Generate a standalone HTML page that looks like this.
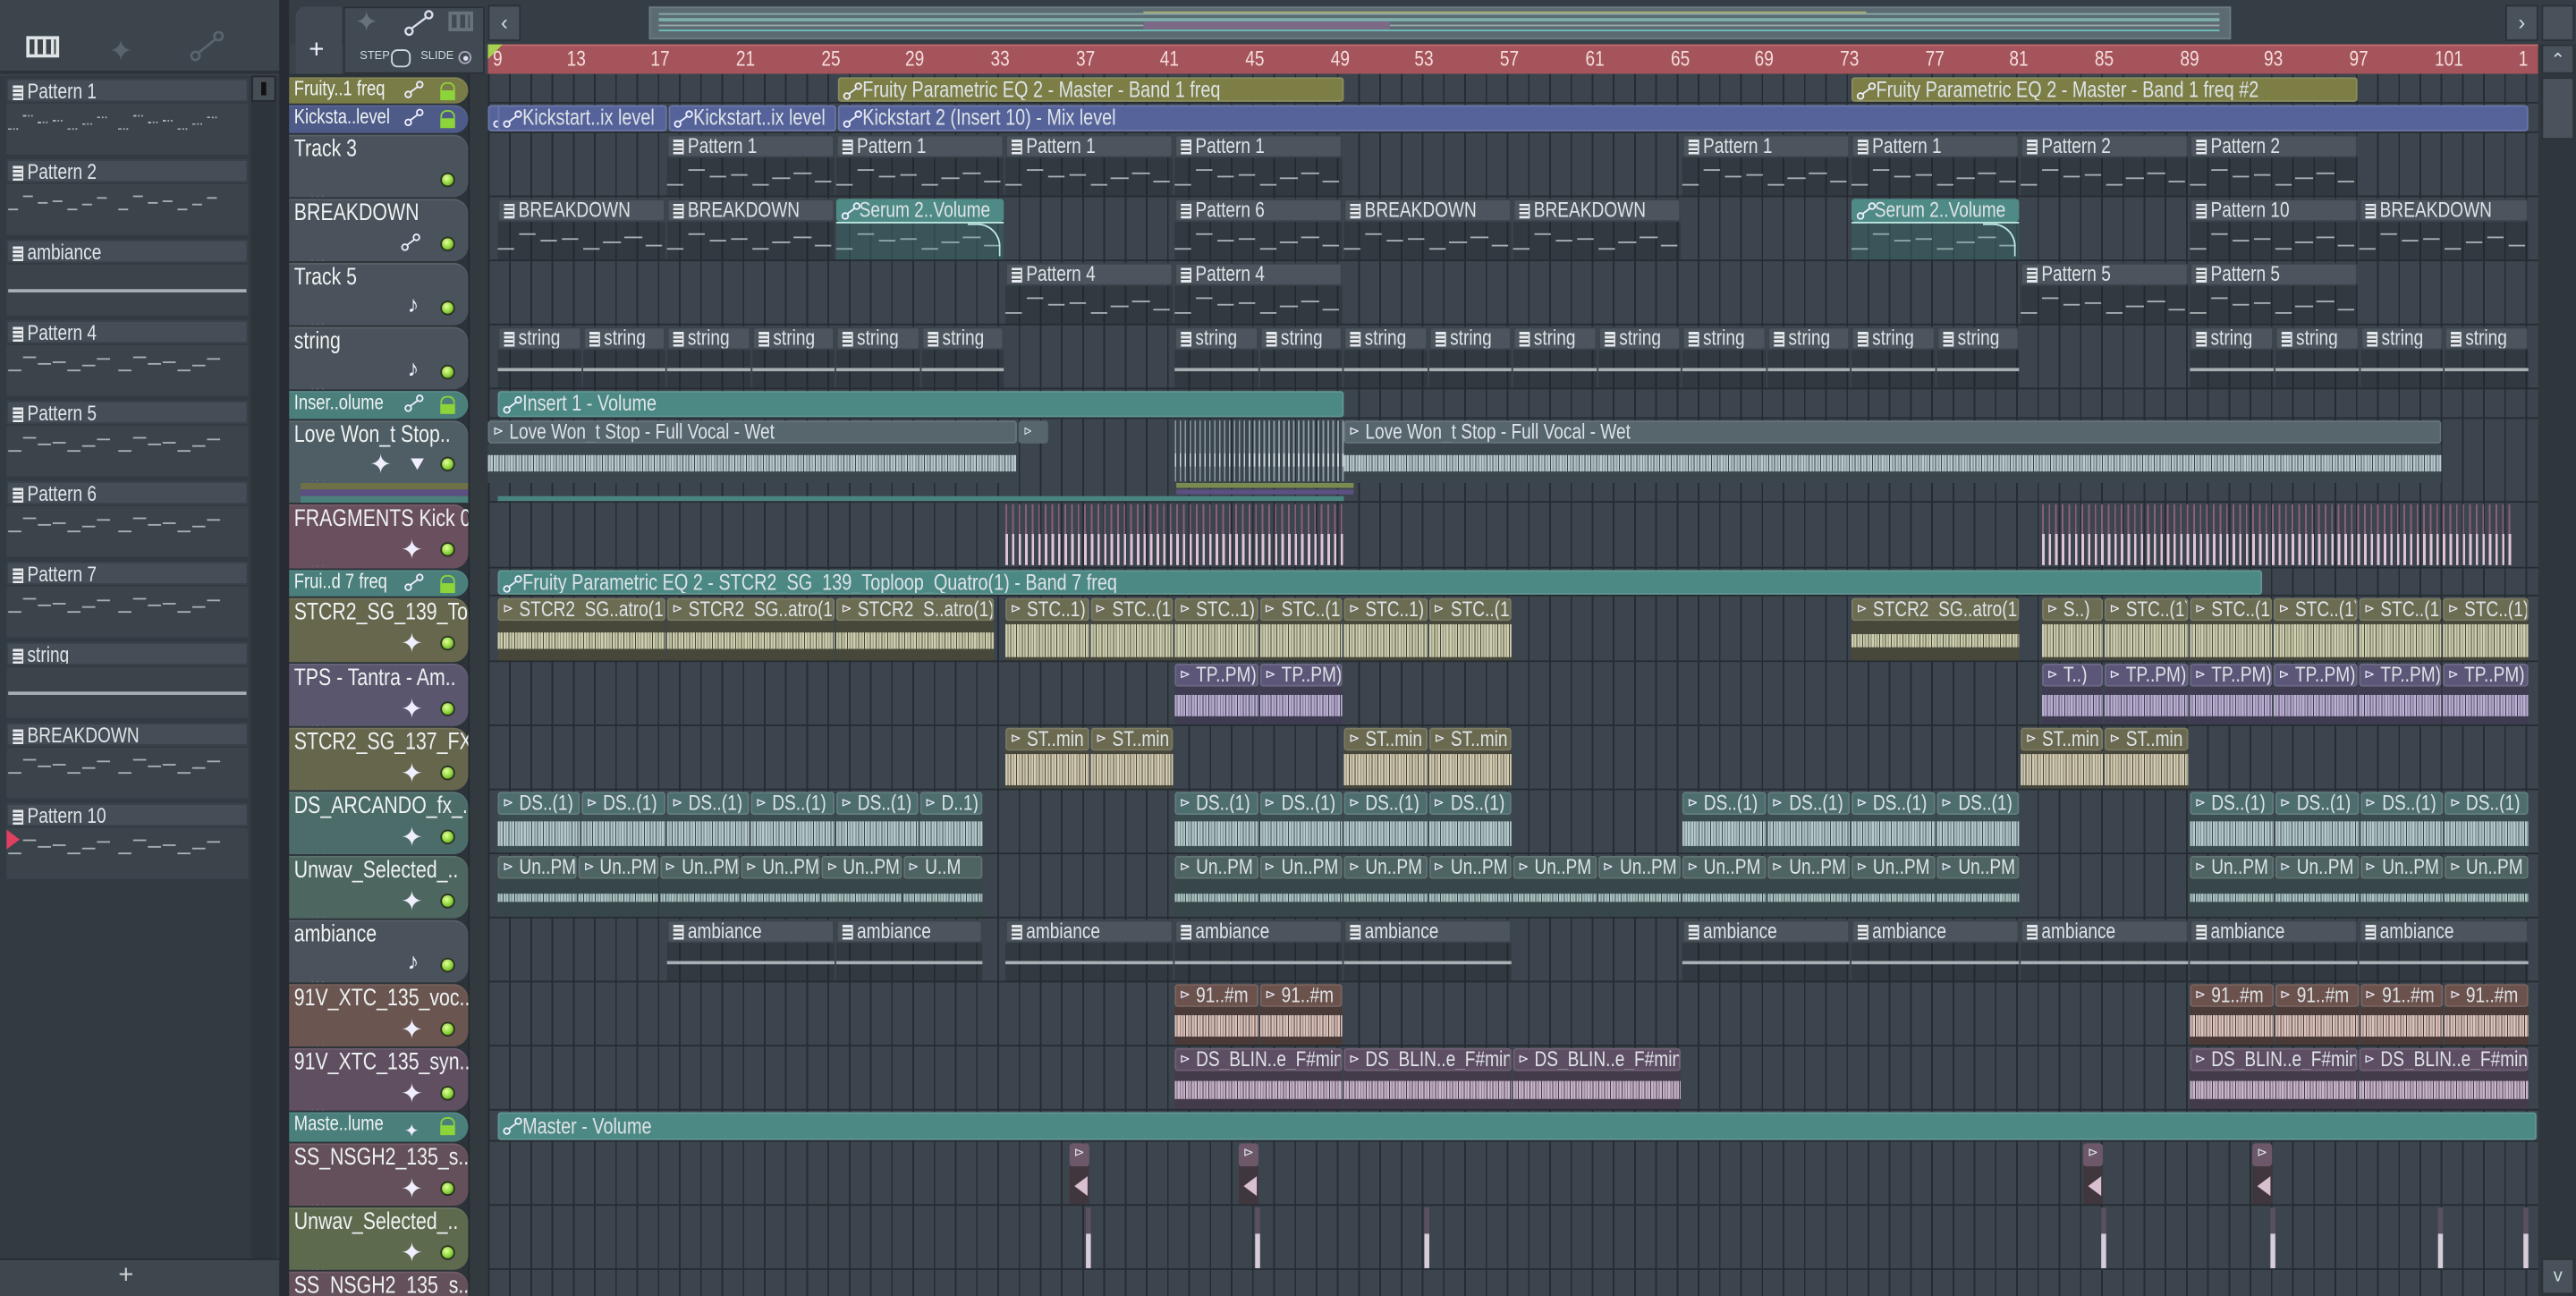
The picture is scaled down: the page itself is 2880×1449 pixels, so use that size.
<!DOCTYPE html>
<html><head><meta charset="utf-8">
<style>
html,body{margin:0;padding:0;background:#343c44;overflow:hidden;width:2880px;height:1448px}
#s{position:absolute;left:0;top:0;width:1568px;height:789px;transform:scale(1.83673);transform-origin:0 0;font-family:"Liberation Sans",sans-serif;color:#dde3e6;overflow:hidden;background:#3a424a}
.a{position:absolute;box-sizing:border-box}
.t{white-space:nowrap;overflow:hidden;font-size:11.5px;line-height:14px}
.sq{display:inline-block;transform:scaleX(.8);transform-origin:0 50%}
.hdr{border-radius:0 9px 9px 0}
.led{position:absolute;width:9px;height:9px;border-radius:50%;background:radial-gradient(circle at 40% 35%,#e4ff9a,#8cd43a 55%,#4c7a1c);border:1px solid #2a3320}
.pi{display:inline-block;width:7px;height:9px;margin:0 3px 0 1px;vertical-align:-1px;background:repeating-linear-gradient(#e8ecee 0 1.5px,#50585e 1.5px 2.5px);border-right:1px solid #e8ecee}
.n{position:absolute;height:1px;background:#a8b0b4}
</style></head><body><div id="s">
<div class="a" style="left:0;top:0;width:176px;height:45px;background:#3c444c;border-bottom:2px solid #2c3238"></div>
<div class="a" style="left:16px;top:22px;width:20px;height:13px;border:2px solid #dfe4e6;background:repeating-linear-gradient(90deg,transparent 0 3px,#dfe4e6 3px 5px);"></div>
<div class="a" style="left:66px;top:21px;font-size:18px;color:#5a646c">✦</div>
<svg class="a" style="left:115px;top:18px" width="22" height="20"><circle cx="4" cy="16" r="2.5" fill="none" stroke="#5a646c" stroke-width="1.5"/><circle cx="18" cy="4" r="2.5" fill="none" stroke="#5a646c" stroke-width="1.5"/><line x1="6" y1="14" x2="16" y2="6" stroke="#5a646c" stroke-width="1.5"/></svg>
<div class="a" style="left:0;top:46px;width:170px;height:720px;background:#323a42"></div>
<div class="a" style="left:153px;top:46px;width:15px;height:720px;background:#2d343a"></div>
<div class="a" style="left:153px;top:46px;width:15px;height:16px;background:#454d55;border:1px solid #25292e"><div class="a" style="left:5px;top:3px;width:3px;height:8px;background:#111"></div></div>
<div class="a" style="left:0;top:766px;width:176px;height:23px;background:#3e464e;border-top:1px solid #262c31"></div>
<div class="a" style="left:72px;top:768px;font-size:16px;color:#c8cdd0">+</div>
<div class="a" style="left:4px;top:505px;width:0;height:0;border-left:8px solid #e04060;border-top:6px solid transparent;border-bottom:6px solid transparent;z-index:5"></div>
<div class="a" style="left:170px;top:0;width:6px;height:789px;background:#262c32"></div>
<div class="a" style="left:176px;top:0;width:1392px;height:27px;background:#353d45"></div>
<div class="a" style="left:180px;top:4px;width:28px;height:41px;background:#414a52;border-radius:6px 0 0 0"></div>
<div class="a" style="left:188px;top:22px;font-size:16px;color:#eef">+</div>
<div class="a" style="left:209px;top:4px;width:86px;height:41px;background:#414a52;border:1px solid #2b3137"></div>
<div class="a" style="left:216px;top:4px;font-size:17px;color:#68727a">✦</div>
<svg class="a" style="left:246px;top:6px" width="18" height="16"><circle cx="3" cy="13" r="2.2" fill="none" stroke="#dde" stroke-width="1.3"/><circle cx="15" cy="3" r="2.2" fill="none" stroke="#dde" stroke-width="1.3"/><line x1="5" y1="11" x2="13" y2="5" stroke="#dde" stroke-width="1.3"/></svg>
<div class="a" style="left:273px;top:7px;width:15px;height:12px;border:2px solid #68727a;background:repeating-linear-gradient(90deg,transparent 0 3px,#68727a 3px 5px)"></div>
<div class="a" style="left:219px;top:31px;font-size:7px;color:#cdd">STEP</div>
<div class="a" style="left:238px;top:30px;width:12px;height:11px;border:1.3px solid #cdd;border-radius:4px"></div>
<div class="a" style="left:256px;top:31px;font-size:7px;color:#cdd">SLIDE</div>
<div class="a" style="left:279px;top:31px;width:8px;height:8px;border:1px solid #aab;border-radius:50%"><div class="a" style="left:2px;top:2px;width:3px;height:3px;border-radius:50%;background:#dde"></div></div>
<div class="a" style="left:297px;top:3px;width:20px;height:22px;background:#49525a;border:1px solid #2b3137;color:#cdd;font-size:13px;text-align:center;line-height:20px">‹</div>
<div class="a" style="left:1525px;top:3px;width:20px;height:22px;background:#49525a;border:1px solid #2b3137;color:#cdd;font-size:13px;text-align:center;line-height:20px">›</div>
<div class="a" style="left:1547px;top:3px;width:20px;height:22px;background:#49525a;border:1px solid #2b3137"></div>
<div class="a" style="left:395px;top:4px;width:963px;height:20px;background:#5b6b71;border:1px solid #6c7c82;overflow:hidden">
 <div class="a" style="left:5px;top:3px;width:950px;height:1px;background:#8aa"></div>
 <div class="a" style="left:5px;top:6px;width:950px;height:2px;background:#7fb0ac"></div>
 <div class="a" style="left:5px;top:10px;width:950px;height:1px;background:#98a8aa"></div>
 <div class="a" style="left:5px;top:13px;width:950px;height:1px;background:#6fc0bc"></div>
 <div class="a" style="left:300px;top:8px;width:150px;height:5px;background:#7a6a86"></div>
 <div class="a" style="left:300px;top:2px;width:440px;height:1px;background:#b0b070"></div>
</div>
<div class="a" style="left:297px;top:27px;width:1248px;height:18px;background:#a4545a;border-top:1px solid #c06a6e"></div>
<div class="a" style="left:1545px;top:27px;width:23px;height:762px;background:#2f363c"></div>
<div class="a" style="left:1547px;top:27px;width:20px;height:18px;background:#49525a;border:1px solid #2b3137;color:#cdd;font-size:11px;text-align:center;line-height:18px">⌃</div>
<div class="a" style="left:1547px;top:47px;width:20px;height:38px;background:#4a535b;border:1px solid #2b3137"></div>
<div class="a" style="left:1547px;top:766px;width:20px;height:22px;background:#49525a;border:1px solid #2b3137;color:#cdd;font-size:11px;text-align:center;line-height:20px">v</div>
<div class="a" style="left:176px;top:45px;width:121px;height:744px;background:#2c3339"></div>
<div class="a" style="left:285px;top:45px;width:12px;height:744px;background:#323a40;border-left:1px solid #262c31"></div>
<div class="a" style="left:297px;top:45px;width:1248px;height:744px;background:repeating-linear-gradient(90deg,#262c32 0 1px,#3c454d 1px 12.92px);"></div>
</div>
<script>
var S=document.getElementById('s');
function el(p,st,h){var d=document.createElement('div');d.className='a '+(p||'');d.style.cssText=st;if(h!==undefined){if(/(^| )t( |$)/.test(p||''))h='<span class="sq">'+h+'</span>';d.innerHTML=h;}S.appendChild(d);return d;}
for(var b=9;b<=105;b+=4){var x=297+(b-9)*12.92;el('t',`left:${x+(b==9?3:-4)}px;top:28px;font-size:13px;color:#f4dcdc;line-height:16px`,b==105?'1':String(b));}
el('',`left:297px;top:27px;width:0;height:0;border-left:9px solid #a8d050;border-bottom:9px solid transparent`);
var pats=['Pattern 1','Pattern 2','ambiance','Pattern 4','Pattern 5','Pattern 6','Pattern 7','string','BREAKDOWN','Pattern 10'];
pats.forEach(function(p,i){var y=48+49*i;
 el('t',`left:4px;top:${y}px;width:147px;height:14px;background:#454e56;border:1px solid #3a4249;padding-left:2px;color:#dfe4e7;font-size:13px`,'<span class="pi"></span>'+p);
 el('',`left:4px;top:${y+15}px;width:147px;height:31px;background:#3b444b`);
 if(p=='ambiance'||p=='string'){el('n',`left:5px;top:${y+30}px;width:145px;height:2px`);}
 else{for(var k=0;k<2;k++){var o=5+k*67;var ys=[20,12,16,15,20,17,13];for(var j=0;j<7;j++){el('n',`left:${o+j*9}px;top:${y+ys[j]+10}px;width:${p=='Pattern 1'||p=='Pattern 2'?6:8}px;height:1px;${p=='Pattern 1'?'border-top:1px dotted #a8b0b4;background:none':''}`);}}}
});
var R=[
['Fruity..1 freq',46,17,'#7a7c48','auto'],
['Kicksta..level',63,18,'#4e5a88','auto'],
['Track 3',81,39,'#4a535b','none'],
['BREAKDOWN',120,39,'#4a535b','autoi'],
['Track 5',159,39,'#4a535b','note'],
['string',198,39,'#4a535b','note'],
['Inser..olume',237,18,'#4a7f7c','auto'],
['Love Won_t Stop..',255,51,'#4f5e64','wave2'],
['FRAGMENTS Kick 01',306,40,'#6a4f5e','wave'],
['Frui..d 7 freq',346,17,'#4a7f7c','auto'],
['STCR2_SG_139_To..',363,40,'#66674d','wave'],
['TPS - Tantra - Am..',403,39,'#5a566e','wave'],
['STCR2_SG_137_FX..',442,39,'#66664d','wave'],
['DS_ARCANDO_fx_..',481,39,'#4c6c6a','wave'],
['Unwav_Selected_..',520,39,'#4e6660','wave'],
['ambiance',559,39,'#4a535b','note'],
['91V_XTC_135_voc..',598,39,'#6a5550','wave'],
['91V_XTC_135_syn..',637,39,'#604f60','wave'],
['Maste..lume',676,19,'#4a7f7c','autow'],
['SS_NSGH2_135_s..',695,39,'#64505a','wave'],
['Unwav_Selected_..',734,39,'#5d6a4e','wave'],
['SS_NSGH2_135_s..',773,40,'#64505a','wave']];
var autoSvg='<svg width="12" height="11" style="position:absolute"><circle cx="2.5" cy="8.5" r="1.8" fill="none" stroke="#eef" stroke-width="1"/><circle cx="9.5" cy="2.5" r="1.8" fill="none" stroke="#eef" stroke-width="1"/><line x1="4" y1="7" x2="8" y2="4" stroke="#eef"/></svg>';
R.forEach(function(r){var n=r[0],y=r[1],h=r[2],c=r[3],ty=r[4];
 el('hdr',`left:176px;top:${y+0.5}px;width:109px;height:${h-1}px;background:${c};box-shadow:inset 0 1px 0 rgba(255,255,255,.08)`);
 var small=h<25;
 el('t',`left:179px;top:${y+(small?1:2)}px;width:106px;font-size:${small?12.5:14.5}px;line-height:${small?15:17}px;color:#eef2f2`,n);
 el('',`left:297px;top:${y+h-1}px;width:1248px;height:1px;background:#262c31`);
 if(small){
   el('',`left:246px;top:${y+3}px;width:12px;height:11px`,ty=='autow'?'<span style="font-size:11px;line-height:11px;color:#eef">✦</span>':autoSvg);
   el('',`left:268px;top:${y+4}px;width:9px;border:1.5px solid #8cd43a;border-bottom:none;border-radius:4px 4px 0 0;height:5px`);
   el('',`left:268px;top:${y+9}px;width:9px;height:6px;background:#8cd43a`);
 } else {
   var ly=y+(h>45?23:24);
   el('led',`left:268px;top:${ly}px`);
   if(ty=='wave'||ty=='wave2')el('',`left:${ty=='wave2'?225:244}px;top:${ly-5}px;font-size:16px;color:#eef`,'✦');
   if(ty=='wave2')el('',`left:250px;top:${ly+1}px;width:0;height:0;border-top:7px solid #eef;border-left:4px solid transparent;border-right:4px solid transparent`);
   if(ty=='note')el('',`left:248px;top:${ly-6}px;font-size:14px;color:#eef`,'♪');
   if(ty=='autoi')el('',`left:244px;top:${ly-2}px;width:14px;height:12px`,autoSvg);
   el('',`left:189px;top:${ly+8}px;font-size:8px;color:#666f74;letter-spacing:1px`,'...');
 }
});
el('',`left:183px;top:294px;width:102px;height:4px;background:#6e7048`);
el('',`left:183px;top:298px;width:102px;height:4px;background:#5c4f82`);
el('',`left:183px;top:302px;width:102px;height:4px;background:#4a7f7c`);
el('',`left:716px;top:294px;width:108px;height:3px;background:#7a8a50`);
el('',`left:716px;top:298px;width:108px;height:3px;background:#5c4f82`);
el('',`left:303px;top:302px;width:515px;height:3px;background:#4a8482`);
var RT={};R.forEach(function(r,i){RT[i]=r;});
function pat(ri,x1,x2,txt){var r=RT[ri],y=r[1]+1,h=r[2]-2;
 el('t',`left:${x1}px;top:${y}px;width:${x2-x1-1}px;height:14px;background:#4c555d;border:1px solid #3c444b;border-radius:2px;padding-left:2px;font-size:13px;line-height:12px`,'<span class="pi"></span>'+txt);
 el('',`left:${x1}px;top:${y+14}px;width:${x2-x1-1}px;height:${h-14}px;background:rgba(30,36,41,.32)`);
 var w=x2-x1;var ys=[16,7,11,10,16,12,9,14];
 if(txt=='string'||txt=='ambiance')el('n',`left:${x1}px;top:${y+h-12}px;width:${x2-x1-1}px;height:2px`);
 else if(txt)for(var j=0;j<8;j++){el('n',`left:${x1+j*w/8}px;top:${y+14+ys[j]}px;width:${w/10}px`);}
}
function aut(ri,x1,x2,txt,c){var r=RT[ri],y=r[1]+1,h=r[2]-2;
 el('t',`left:${x1}px;top:${y}px;width:${x2-x1-1}px;height:${h}px;background:${c};border:1px solid rgba(255,255,255,.12);border-radius:2px;padding-left:14px;font-size:13.5px;line-height:${h-2}px`,txt);
 el('',`left:${x1+3}px;top:${y+3}px;width:12px;height:11px`,autoSvg);
}
function aud(ri,x1,x2,txt,hc,bc,wc,amp){var r=RT[ri],y=r[1]+1,h=Math.min(r[2],40)-2;amp=amp||0.5;
 el('t',`left:${x1}px;top:${y}px;width:${x2-x1-1}px;height:14px;background:${hc};border:1px solid rgba(255,255,255,.1);border-radius:2px;padding-left:12px;font-size:13px;line-height:12px`,txt);
 el('',`left:${x1+3}px;top:${y+3}px;font-size:8px;line-height:8px;color:#eef`,'⊳');
 var by=y+14,bh=h-14;
 el('',`left:${x1}px;top:${by}px;width:${x2-x1-1}px;height:${bh}px;background:${bc}`);
 var wh=bh*amp;el('',`left:${x1}px;top:${by+(bh-wh)/2}px;width:${x2-x1-1}px;height:${wh}px;background:repeating-linear-gradient(90deg,${wc} 0 1px,${wc}aa 1px 2px,${wc} 2px 3px,transparent 3px 3.5px)`);
}
function seq(fn,ri,starts,txts,rest){for(var i=0;i<starts.length-1;i++){fn.apply(null,[ri,starts[i],starts[i+1],typeof txts=='string'?txts:txts[i]].concat(rest||[]));}}
function lin(a,b,n){var o=[];for(var i=0;i<=n;i++)o.push(a+(b-a)*i/n);return o;}
aut(0,510,819,'Fruity Parametric EQ 2 - Master - Band 1 freq','#7c7e46');
aut(0,1127,1436,'Fruity Parametric EQ 2 - Master - Band 1 freq #2','#7c7e46');
aut(1,297,303,'','#56639a');
aut(1,303,407,'Kickstart..ix level','#56639a');aut(1,407,510,'Kickstart..ix level','#56639a');aut(1,510,1540,'Kickstart 2 (Insert 10) - Mix level','#56639a');
[[406,'Pattern 1'],[509,'Pattern 1'],[612,'Pattern 1'],[715,'Pattern 1'],[1024,'Pattern 1'],[1127,'Pattern 1'],[1230,'Pattern 2'],[1333,'Pattern 2']].forEach(function(p){pat(2,p[0],p[0]+103,p[1]);});
[[303,406,'BREAKDOWN'],[406,509,'BREAKDOWN'],[715,818,'Pattern 6'],[818,921,'BREAKDOWN'],[921,1024,'BREAKDOWN'],[1333,1436,'Pattern 10'],[1436,1540,'BREAKDOWN']].forEach(function(p){pat(3,p[0],p[1],p[2]);});
[509,1127].forEach(function(x){pat(3,x,x+103,'x');var y=RT[3][1]+1;el('t',`left:${x}px;top:${y}px;width:102px;height:14px;background:#4f8a86;border-radius:2px;padding-left:14px;font-size:13px;line-height:14px`,'Serum 2..Volume');el('',`left:${x+3}px;top:${y+2}px;width:12px;height:11px`,autoSvg);el('',`left:${x}px;top:${y+14}px;width:102px;height:23px;background:rgba(80,150,146,.3);border-top:1px solid #bfe8e4`);el('',`left:${x+80}px;top:${y+15}px;width:20px;height:20px;border-top:1px solid #bfe8e4;border-right:1px solid #bfe8e4;border-radius:0 14px 0 0`);});
[[612,715,'Pattern 4'],[715,818,'Pattern 4'],[1230,1333,'Pattern 5'],[1333,1436,'Pattern 5']].forEach(function(p){pat(4,p[0],p[1],p[2]);});
seq(pat,5,lin(303,612,6),'string');seq(pat,5,lin(715,1230,10),'string');seq(pat,5,lin(1333,1540,4),'string');
aut(6,303,819,'Insert 1 - Volume','#4c8884');
(function(){var y=RT[7][1]+1;
 aud(7,297,620,'Love Won_t Stop - Full Vocal - Wet','#56666c','#3a464c','#b9c9cd',0.45);
 el('t',`left:620px;top:${y}px;width:18px;height:14px;background:#56666c;border-radius:2px;padding-left:3px;font-size:8px`,'⊳');
 el('',`left:715px;top:${y}px;width:103px;height:37px;background:repeating-linear-gradient(90deg,#8a9aa0 0 1px,transparent 1px 3px)`);
 el('',`left:715px;top:${y+20}px;width:103px;height:8px;background:repeating-linear-gradient(90deg,#c9d6d9 0 1px,transparent 1px 3px)`);
 aud(7,818,1487,'Love Won_t Stop - Full Vocal - Wet','#56666c','#3a464c','#b9c9cd',0.45);
})();
[[612,818],[1243,1530]].forEach(function(p){var y=RT[8][1]+1;el('',`left:${p[0]}px;top:${y}px;width:${p[1]-p[0]}px;height:18px;background:repeating-linear-gradient(90deg,#8a5f78 0 1px,transparent 1px 4px)`);el('',`left:${p[0]}px;top:${y+18}px;width:${p[1]-p[0]}px;height:19px;background:repeating-linear-gradient(90deg,#e0c4d6 0 1.5px,transparent 1.5px 4px)`);});
aut(9,303,1378,'Fruity Parametric EQ 2 - STCR2_SG_139_Toploop_Quatro(1) - Band 7 freq','#4c8884');
var st=['#6b6c52','#47483a','#cfcfb0'];
function A(ri,xs,t,c,amp){seq(aud,ri,xs,t,c.concat([amp||0.6]));}
A(10,[303,406,509,606],['STCR2_SG..atro(1)','STCR2_SG..atro(1)','STCR2_S..atro(1)'],st,0.45);
A(10,lin(612,921,6),['STC..1)','STC..(1)','STC..1)','STC..(1)','STC..1)','STC..(1)'],st,0.85);
A(10,[1127,1230],['STCR2_SG..atro(1)'],st,0.35);
A(10,[1243,1281,1333,1384,1436,1487,1540],['S..)','STC..(1)','STC..(1)','STC..(1)','STC..(1)','STC..(1)'],st,0.85);
var tp=['#5c5778','#3f3c52','#bcb0d2'];
A(11,[715,767,818],'TP..PM)',tp,0.55);A(11,[1243,1281,1333,1384,1436,1487,1540],['T..)','TP..PM)','TP..PM)','TP..PM)','TP..PM)','TP..PM)'],tp,0.55);
var s7=['#6b6a50','#47463a','#d4ccb2'];
A(12,[612,664,715],'ST..min',s7,0.8);A(12,[818,870,921],'ST..min',s7,0.8);A(12,[1230,1281,1333],'ST..min',s7,0.8);
var ds=['#4e6e6e','#3a4c4e','#b6cacc'];
A(13,[303,354,406,457,509,560,599],['DS..(1)','DS..(1)','DS..(1)','DS..(1)','DS..(1)','D..1)'],ds,0.65);
A(13,lin(715,921,4),'DS..(1)',ds,0.65);A(13,lin(1024,1230,4),'DS..(1)',ds,0.65);A(13,lin(1333,1540,4),'DS..(1)',ds,0.65);
var un=['#4e6462','#374648','#aac2c2'];
A(14,lin(303,599,6),['Un..PM','Un..PM','Un..PM','Un..PM','Un..PM','U..M'],un,0.25);A(14,lin(715,1230,10),'Un..PM',un,0.25);A(14,lin(1333,1540,4),'Un..PM',un,0.25);
[[406,509],[509,599],[612,715],[715,818],[818,921],[1024,1127],[1127,1230],[1230,1333],[1333,1436],[1436,1540]].forEach(function(p){pat(15,p[0],p[1],'ambiance');});
var v9=['#6c524c','#4a3a38','#dcc4bc'];
A(16,[715,767,818],'91..#m',v9,0.6);A(16,lin(1333,1540,4),'91..#m',v9,0.6);
var s9=['#5e4e64','#433a4a','#cab6ca'];
A(17,[715,818,921,1024],'DS_BLIN..e_F#min',s9,0.45);A(17,[1333,1436,1540],'DS_BLIN..e_F#min',s9,0.45);
aut(18,303,1545,'Master - Volume','#4c8884');
[651,754,1268,1371].forEach(function(x){var y=RT[19][1]+1;el('',`left:${x}px;top:${y}px;width:12px;height:14px;background:#6c5868;border-radius:2px;font-size:8px;text-align:center;line-height:12px`,'⊳');el('',`left:${x}px;top:${y+14}px;width:12px;height:23px;background:#40363e`);el('',`left:${x+3}px;top:${y+20}px;width:0;height:0;border-right:8px solid #d8c0d0;border-top:6px solid transparent;border-bottom:6px solid transparent`);});
[661,764,867,1279,1382,1484,1536].forEach(function(x){var y=RT[20][1]+1;el('',`left:${x}px;top:${y}px;width:3px;height:16px;background:#5c5060`);el('',`left:${x}px;top:${y+16}px;width:3px;height:21px;background:#d8ccd8`);});
</script>
</body></html>
